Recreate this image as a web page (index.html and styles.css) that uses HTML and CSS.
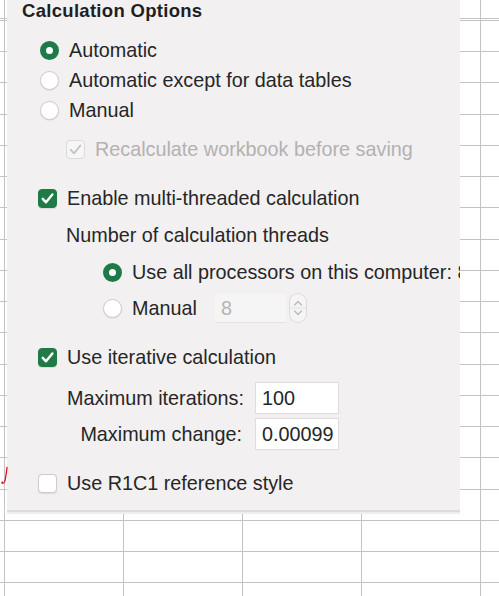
FILE: index.html
```html
<!DOCTYPE html>
<html>
<head>
<meta charset="utf-8">
<title>Calculation Options</title>
<link rel="stylesheet" href="styles.css">
</head>
<body>
<div class="sheet">
  <section class="panel">
    <div class="title">Calculation Options</div>

    <div class="row rad r-first"><span class="radio on"></span><span>Automatic</span></div>
    <div class="row rad"><span class="radio"></span><span>Automatic except for data tables</span></div>
    <div class="row rad"><span class="radio"></span><span>Manual</span></div>

    <div class="row sub disabled r-recalc">
      <span class="check dis"><svg viewBox="0 0 18 18"><path d="M4.5 9.3 L7.6 12.6 L13.6 5.2"/></svg></span>
      <span>Recalculate workbook before saving</span>
    </div>

    <div class="row chk r-enable">
      <span class="check on"><svg viewBox="0 0 18 18"><path d="M4.5 9.3 L7.6 12.6 L13.6 5.2"/></svg></span>
      <span>Enable multi-threaded calculation</span>
    </div>
    <div class="row sub r-num"><span>Number of calculation threads</span></div>
    <div class="row sub2 r-use"><span class="radio on"></span><span class="nowrap">Use all processors on this computer: 8</span></div>
    <div class="row sub2 r-man">
      <span class="radio"></span><span>Manual</span>
      <span class="numbox dis">8</span>
      <span class="stepper">
        <svg viewBox="0 0 18 30"><path class="chev" d="M5.5 12 L9 8.5 L12.5 12"/><path class="chev" d="M5.5 18 L9 21.5 L12.5 18"/><path class="mid" d="M1 15 H17"/></svg>
      </span>
    </div>

    <div class="row chk r-iter">
      <span class="check on"><svg viewBox="0 0 18 18"><path d="M4.5 9.3 L7.6 12.6 L13.6 5.2"/></svg></span>
      <span>Use iterative calculation</span>
    </div>
    <div class="field r-maxit"><span class="flabel">Maximum iterations:</span><span class="numbox">100</span></div>
    <div class="field r-maxch"><span class="flabel">Maximum change:</span><span class="numbox">0.00099</span></div>

    <div class="row chk r-r1c1"><span class="check"></span><span>Use R1C1 reference style</span></div>
  </section>
  <svg class="mark" viewBox="0 0 10 22"><path d="M7 1.5 C6.6 5 6 9 5.4 13 C5 15.5 4.2 17 2.8 17.4 C2 17.6 1.6 16.8 2.2 16"/></svg>
</div>
</body>
</html>
```

FILE: styles.css
```css
html, body {
  margin: 0;
  padding: 0;
}

body {
  width: 499px;
  height: 596px;
  overflow: hidden;
  background-color: #ffffff;
  font-family: "Liberation Sans", Arial, sans-serif;
}

.sheet {
  position: relative;
  width: 499px;
  height: 596px;
  background-image:
    repeating-linear-gradient(to right, #c3c3c3 0 1px, transparent 1px 119px),
    repeating-linear-gradient(to bottom, #c3c3c3 0 1px, transparent 1px 31.25px);
  background-position: 4px 0, 0 20px;
}

.panel {
  margin-left: 7px;
  width: 453px;
  box-sizing: border-box;
  padding: 0 0 12px 0;
  background: #f2f0f1;
  border-bottom: 2px solid #dcdadb;
  box-shadow: 0 2px 0 #efedee;
  overflow: hidden;
  color: #262626;
  font-size: 19.8px;
}

.title {
  height: 22px;
  line-height: 22px;
  padding-left: 15px;
  margin-bottom: 13px;
  font-weight: bold;
  font-size: 18.5px;
  letter-spacing: 0.3px;
  color: #1f1f1f;
}

.row {
  display: flex;
  align-items: center;
  height: 30px;
  line-height: 30px;
  white-space: nowrap;
}

.rad { padding-left: 33px; }
.chk { padding-left: 31px; }
.sub { padding-left: 59px; }
.sub2 { padding-left: 96px; }

.radio, .check {
  flex: none;
  box-sizing: border-box;
  width: 19px;
  height: 19px;
  margin-right: 10px;
}

.radio {
  border-radius: 50%;
  background: #ffffff;
  border: 1px solid #cfcdce;
  box-shadow: 0 0.5px 1px rgba(0,0,0,0.12);
}

.radio.on {
  border: 6.5px solid #1e7a46;
  background: #ffffff;
  box-shadow: none;
}

.check {
  border-radius: 4px;
  background: #ffffff;
  border: 1px solid #cfcdce;
  box-shadow: 0 0.5px 1px rgba(0,0,0,0.1);
  display: flex;
}

.check svg {
  width: 19px;
  height: 19px;
  margin: -1px;
}

.check path {
  fill: none;
  stroke: #ffffff;
  stroke-width: 2.3;
  stroke-linecap: round;
  stroke-linejoin: round;
}

.check.on {
  background: #1f7a46;
  border-color: #1f7a46;
}

.check.dis {
  background: #f7f6f6;
  border-color: #dcdadb;
  box-shadow: none;
}

.check.dis path {
  stroke: #c4c2c3;
  stroke-width: 1.8;
}

.disabled { color: #b3b1b2; }

.r-recalc { margin-top: 9px; }
.r-enable { margin-top: 19px; }
.r-num { margin-top: 7px; }
.r-use { margin-top: 7px; }
.r-man { margin-top: 6px; }
.r-iter { margin-top: 19px; }
.r-maxit { margin-top: 10px; }
.r-maxch { margin-top: 4px; }
.r-r1c1 { margin-top: 18px; }

.numbox {
  box-sizing: border-box;
  display: block;
  height: 30px;
  line-height: 30px;
  padding-left: 6px;
  background: #ffffff;
  box-shadow: 0 0 0 1px #dedcdd, 0 1px 1px rgba(0,0,0,0.08);
  color: #262626;
}

.r-man .numbox {
  margin-left: 18px;
  width: 71px;
  height: 28px;
  line-height: 28px;
}

.numbox.dis {
  background: #f6f5f5;
  color: #b5b3b4;
  box-shadow: 0 1px 0 #e3e1e2;
}

.stepper {
  margin-left: 3px;
  width: 18px;
  height: 30px;
  display: block;
}

.stepper svg {
  display: block;
  width: 18px;
  height: 30px;
  border-radius: 9px;
  background: #f6f5f5;
  box-shadow: inset 0 0 0 1px #dcdadb;
}

.stepper .chev {
  fill: none;
  stroke: #bdbbbc;
  stroke-width: 1.4;
  stroke-linecap: round;
  stroke-linejoin: round;
}

.stepper .mid {
  stroke: #e2e0e1;
  stroke-width: 1;
}

.field {
  display: flex;
  align-items: center;
  height: 32px;
  padding-left: 60px;
  white-space: nowrap;
}

.flabel {
  width: 175px;
  text-align: right;
  margin-right: 14px;
}

.field .numbox {
  width: 82px;
  height: 30px;
}

.mark {
  position: absolute;
  left: 0;
  top: 466px;
  width: 10px;
  height: 22px;
}

.mark path {
  fill: none;
  stroke: #e0101a;
  stroke-width: 1.3;
  stroke-linecap: round;
}
```
